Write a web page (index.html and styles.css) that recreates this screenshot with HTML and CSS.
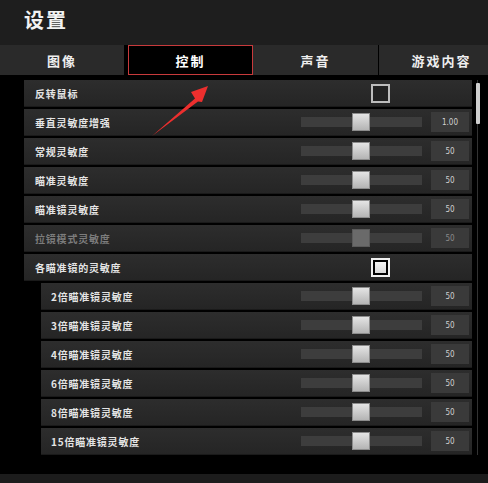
FILE: index.html
```html
<!DOCTYPE html>
<html lang="zh-CN">
<head>
<meta charset="utf-8">
<title>设置</title>
<link rel="stylesheet" href="styles.css">
</head>
<body>
<div class="app">
  <header class="header"><h1 class="title">设置</h1></header>
  <nav class="tabs">
    <div class="tab tab-a">图像</div>
    <div class="tab tab-b active">控制</div>
    <div class="tab tab-c">声音</div>
    <div class="tab tab-d">游戏内容</div>
  </nav>
  <main class="content">
    <div class="list">
      <div class="row"><span class="label">反转鼠标</span><span class="check"></span></div>
      <div class="row"><span class="label">垂直灵敏度增强</span><div class="ctrl"><div class="track"><span class="knob"></span></div><span class="val">1.00</span></div></div>
      <div class="row"><span class="label">常规灵敏度</span><div class="ctrl"><div class="track"><span class="knob"></span></div><span class="val">50</span></div></div>
      <div class="row"><span class="label">瞄准灵敏度</span><div class="ctrl"><div class="track"><span class="knob"></span></div><span class="val">50</span></div></div>
      <div class="row"><span class="label">瞄准镜灵敏度</span><div class="ctrl"><div class="track"><span class="knob"></span></div><span class="val">50</span></div></div>
      <div class="row disabled"><span class="label">拉镜模式灵敏度</span><div class="ctrl"><div class="track"><span class="knob"></span></div><span class="val">50</span></div></div>
      <div class="row"><span class="label">各瞄准镜的灵敏度</span><span class="check checked"><span class="mark"></span></span></div>
      <div class="row sub"><span class="label">2倍瞄准镜灵敏度</span><div class="ctrl"><div class="track"><span class="knob"></span></div><span class="val">50</span></div></div>
      <div class="row sub"><span class="label">3倍瞄准镜灵敏度</span><div class="ctrl"><div class="track"><span class="knob"></span></div><span class="val">50</span></div></div>
      <div class="row sub"><span class="label">4倍瞄准镜灵敏度</span><div class="ctrl"><div class="track"><span class="knob"></span></div><span class="val">50</span></div></div>
      <div class="row sub"><span class="label">6倍瞄准镜灵敏度</span><div class="ctrl"><div class="track"><span class="knob"></span></div><span class="val">50</span></div></div>
      <div class="row sub"><span class="label">8倍瞄准镜灵敏度</span><div class="ctrl"><div class="track"><span class="knob"></span></div><span class="val">50</span></div></div>
      <div class="row sub"><span class="label">15倍瞄准镜灵敏度</span><div class="ctrl"><div class="track"><span class="knob"></span></div><span class="val">50</span></div></div>
    </div>
    <div class="scrollbar"><span class="thumb"></span></div>
  </main>
  <footer class="footer"></footer>
  <svg class="arrow" width="488" height="483" viewBox="0 0 488 483" aria-hidden="true">
    <polygon points="152,136 195,98.5 191,92 208,86 202,102 198,101.5" fill="#ec2f2e"/>
  </svg>
</div>
</body>
</html>
```
FILE: styles.css
```css
* { box-sizing: border-box; margin: 0; padding: 0; }
html, body { width: 488px; height: 483px; overflow: hidden; background: #000; }
body { font-family: "Noto Sans CJK SC", "Noto Sans", sans-serif; color: #e6e6e6; }
.app { position: relative; width: 488px; height: 483px; display: flex; flex-direction: column; overflow: hidden; }

.header { height: 45px; background: #1e1e1e; display: flex; align-items: center; padding-left: 24px; }
.title { font-size: 20px; font-weight: 700; color: #f2f2f2; letter-spacing: 2px; line-height: 1; margin-top: -6px; }

.tabs { height: 30px; display: flex; background: #000; overflow: hidden; }
.tab { flex: none; display: flex; align-items: center; justify-content: center; font-size: 13px; font-weight: 700; letter-spacing: 2px; color: #eee; background: #2a2a2a; }
.tab-a { width: 124px; margin-right: 4px; }
.tab-b { width: 125px; }
.tab-c { width: 125px; margin-right: 1px; }
.tab-d { width: 125px; }
.tab.active { background: #000; border: 1px solid #c83a3c; color: #fff; }

.content { flex: 1; display: flex; padding-top: 5px; }
.list { width: 448px; margin-left: 24px; display: flex; flex-direction: column; gap: 2px; }
.row { height: 27px; display: flex; align-items: center; background: linear-gradient(#2d2d2d, #252525); border-bottom: 1px solid #1a1a1a; }
.row.sub { margin-left: 17px; }
.label { flex: 1; padding-left: 11px; font-size: 10px; font-weight: 700; letter-spacing: 0.8px; color: #e4e4e4; }
.row.sub .label { padding-left: 10px; }

.ctrl { display: flex; align-items: center; padding-right: 3px; }
.track { position: relative; width: 121px; height: 10px; background: #3d3d3d; margin-right: 9px; }
.knob { position: absolute; left: 51px; top: -4px; width: 18px; height: 18px; background: linear-gradient(#e4e4e4, #b4b4b4); border: 1px solid #8c8c8c; }
.val { width: 38px; height: 20px; background: #3a3a3a; display: flex; align-items: center; justify-content: center; font-family: "DejaVu Sans Condensed", "Liberation Sans", sans-serif; font-size: 8px; color: #d0d0d0; }

.row.disabled .label { color: #7c7c7c; }
.row.disabled .knob { background: #6a6a6a; border-color: #5a5a5a; }
.row.disabled .val { color: #8a8a8a; }

.check { width: 19px; height: 19px; margin-right: 82px; border: 2px solid #bdbdbd; background: #222; display: flex; align-items: center; justify-content: center; }
.check.checked { border-color: #f0f0f0; background: #000; }
.mark { width: 11px; height: 11px; background: linear-gradient(#f4f4f4, #d8d8d8); }

.scrollbar { width: 4px; margin-left: 4px; height: 375px; background: linear-gradient(to right, transparent 1.5px, #333 1.5px, #333 2.5px, transparent 2.5px); }
.thumb { display: block; margin-top: 3px; height: 41px; background: #cfcfcf; border-radius: 1px; }

.footer { height: 9px; background: #1c1c1c; }
.arrow { position: absolute; left: 0; top: 0; pointer-events: none; }
```
